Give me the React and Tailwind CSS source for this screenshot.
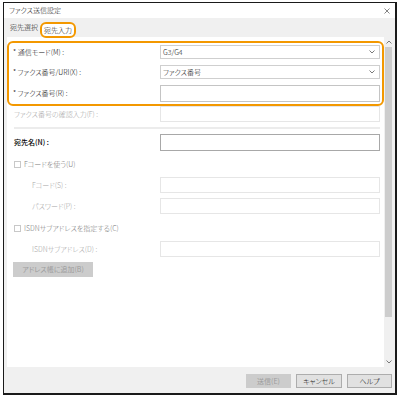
import React from 'react';

const FONT = "font-['Noto_Sans_CJK_JP','Noto_Sans',sans-serif] [font-feature-settings:'palt'] font-light";

const Chevron = ({ up }) => (
  <svg width="6" height="4" viewBox="0 0 6 4" fill="none">
    <path d={up ? "M0.5 3.5L3 1L5.5 3.5" : "M0.5 0.5L3 3L5.5 0.5"} stroke="#6b6b6b" strokeWidth="0.9" />
  </svg>
);

// ラベル + 入力欄の1行
const Field = ({ label, tone = 'normal', indent = false, boxH = 16, box = 'disabled', value, select, className = '' }) => {
  const labelColor = tone === 'disabled' ? 'text-[#a6a6a6]' : tone === 'bold' ? 'text-black font-medium' : 'text-[#111]';
  const boxStyle =
    box === 'select' ? 'border-[#cfcfcf] bg-white'
    : box === 'active' ? 'border-[#a8a8a8] bg-white'
    : box === 'input' ? 'border-[#c4c4c4] bg-white'
    : 'border-[#e6e6e6] bg-white';
  return (
    <div className={`flex items-center justify-between ${className}`}>
      <span className={`text-[7px] leading-none ${labelColor} ${indent ? 'pl-[18px]' : ''}`}>{label}</span>
      <div className={`w-[220px] flex items-center justify-between border ${boxStyle} pl-[2px] pr-[4px]`} style={{ height: boxH }}>
        <span className="text-[7px] leading-none text-[#111]">{value}</span>
        {select && <Chevron />}
      </div>
    </div>
  );
};

const Check = ({ label, className = '' }) => (
  <div className={`flex items-center gap-[3px] h-[14px] ${className}`}>
    <span className="w-[7px] h-[7px] border border-[#c8c8c8] bg-white" />
    <span className="text-[7px] leading-none text-[#7a7a7a]">{label}</span>
  </div>
);

export default function App() {
  return (
    <div className={`w-[400px] h-[398px] bg-white pt-[2px] pl-[3px] ${FONT}`}>
      <div className="w-[394px] h-[393px] border-t border-l border-r-2 border-b-2 border-[#1a1a1a] bg-[#f0f0f0] flex flex-col">
        {/* タイトルバー */}
        <div className="h-[15px] bg-white flex items-center justify-between pl-[5px] pr-[5px]">
          <span className="text-[7px] leading-none text-[#111]">ファクス送信設定</span>
          <svg width="6" height="6" viewBox="0 0 6 6"><path d="M0.5 0.5L5.5 5.5M5.5 0.5L0.5 5.5" stroke="#666" strokeWidth="0.8" /></svg>
        </div>

        {/* タブ */}
        <div className="h-[19px] flex items-end pl-[5px] gap-[1px]">
          <span className="text-[7px] leading-none text-[#111] px-[1px] pb-[6px]">宛先選択</span>
          <span className="h-[16px] mb-[-1px] px-[2px] flex items-center border-2 border-[#f39800] rounded-[6px] bg-white text-[7px] leading-none text-[#111] relative">
            宛先入力
          </span>
        </div>

        {/* 本体 */}
        <div className="h-[330px] flex ml-[3px] mr-[2px]">
          <div className="w-[377px] bg-white flex flex-col">
            {/* 必須項目 */}
            <div className="mt-[4px] h-[65px] border-2 border-[#f39800] rounded-[6px] pl-[4px] pr-[2px] pt-[2px] flex flex-col gap-[6px]">
              <Field label="* 通信モード(M) :" box="select" boxH={14} value="G3/G4" select />
              <Field label="* ファクス番号/URI(X) :" box="select" boxH={14} value="ファクス番号" select />
              <Field label="* ファクス番号(R) :" box="input" boxH={17} />
            </div>

            <div className="pl-[7px] pr-[4px] flex flex-col">
              <Field label="ファクス番号の確認入力(F) :" tone="disabled" boxH={16} />
              <div className="h-[2px] bg-[#ececec] mt-[5px]" />
              <Field label="宛先名(N) :" tone="bold" box="active" boxH={17} className="mt-[5px]" />
              <Check label="Fコードを使う(U)" className="mt-[6px]" />
              <Field label="Fコード(S) :" tone="disabled" indent boxH={16} className="mt-[6px]" />
              <Field label="パスワード(P) :" tone="disabled" indent boxH={16} className="mt-[5px]" />
              <Check label="ISDNサブアドレスを指定する(C)" className="mt-[7px]" />
              <Field label="ISDNサブアドレス(D) :" tone="disabled" indent boxH={16} className="mt-[6px]" />
              <button className="mt-[5px] ml-[-1px] w-[80px] h-[15px] bg-[#cccccc] text-[7px] leading-none font-normal text-[#9c9c9c] flex items-center justify-center">
                アドレス帳に追加(B)
              </button>
            </div>
          </div>

          {/* スクロールバー */}
          <div className="w-[9px] bg-[#f0f0f0] flex flex-col items-center">
            <div className="h-[10px] flex items-center justify-center"><Chevron up /></div>
            <div className="w-[7px] h-[270px] bg-[#cdcdcd]" />
            <div className="flex-1" />
            <div className="h-[10px] flex items-center justify-center"><Chevron /></div>
          </div>
        </div>

        {/* フッター */}
        <div className="flex-1 flex justify-end items-start pt-[7px] pr-[3px] gap-[5px]">
          <button className="w-[45px] h-[14px] bg-[#cccccc] text-[7px] leading-none font-normal text-[#9c9c9c]">送信(E)</button>
          <button className="w-[46px] h-[14px] bg-[#e1e1e1] border border-[#adadad] text-[7px] leading-none text-[#111]">キャンセル</button>
          <button className="w-[45px] h-[14px] bg-[#e1e1e1] border border-[#adadad] text-[7px] leading-none text-[#111]">ヘルプ</button>
        </div>
      </div>
    </div>
  );
}
